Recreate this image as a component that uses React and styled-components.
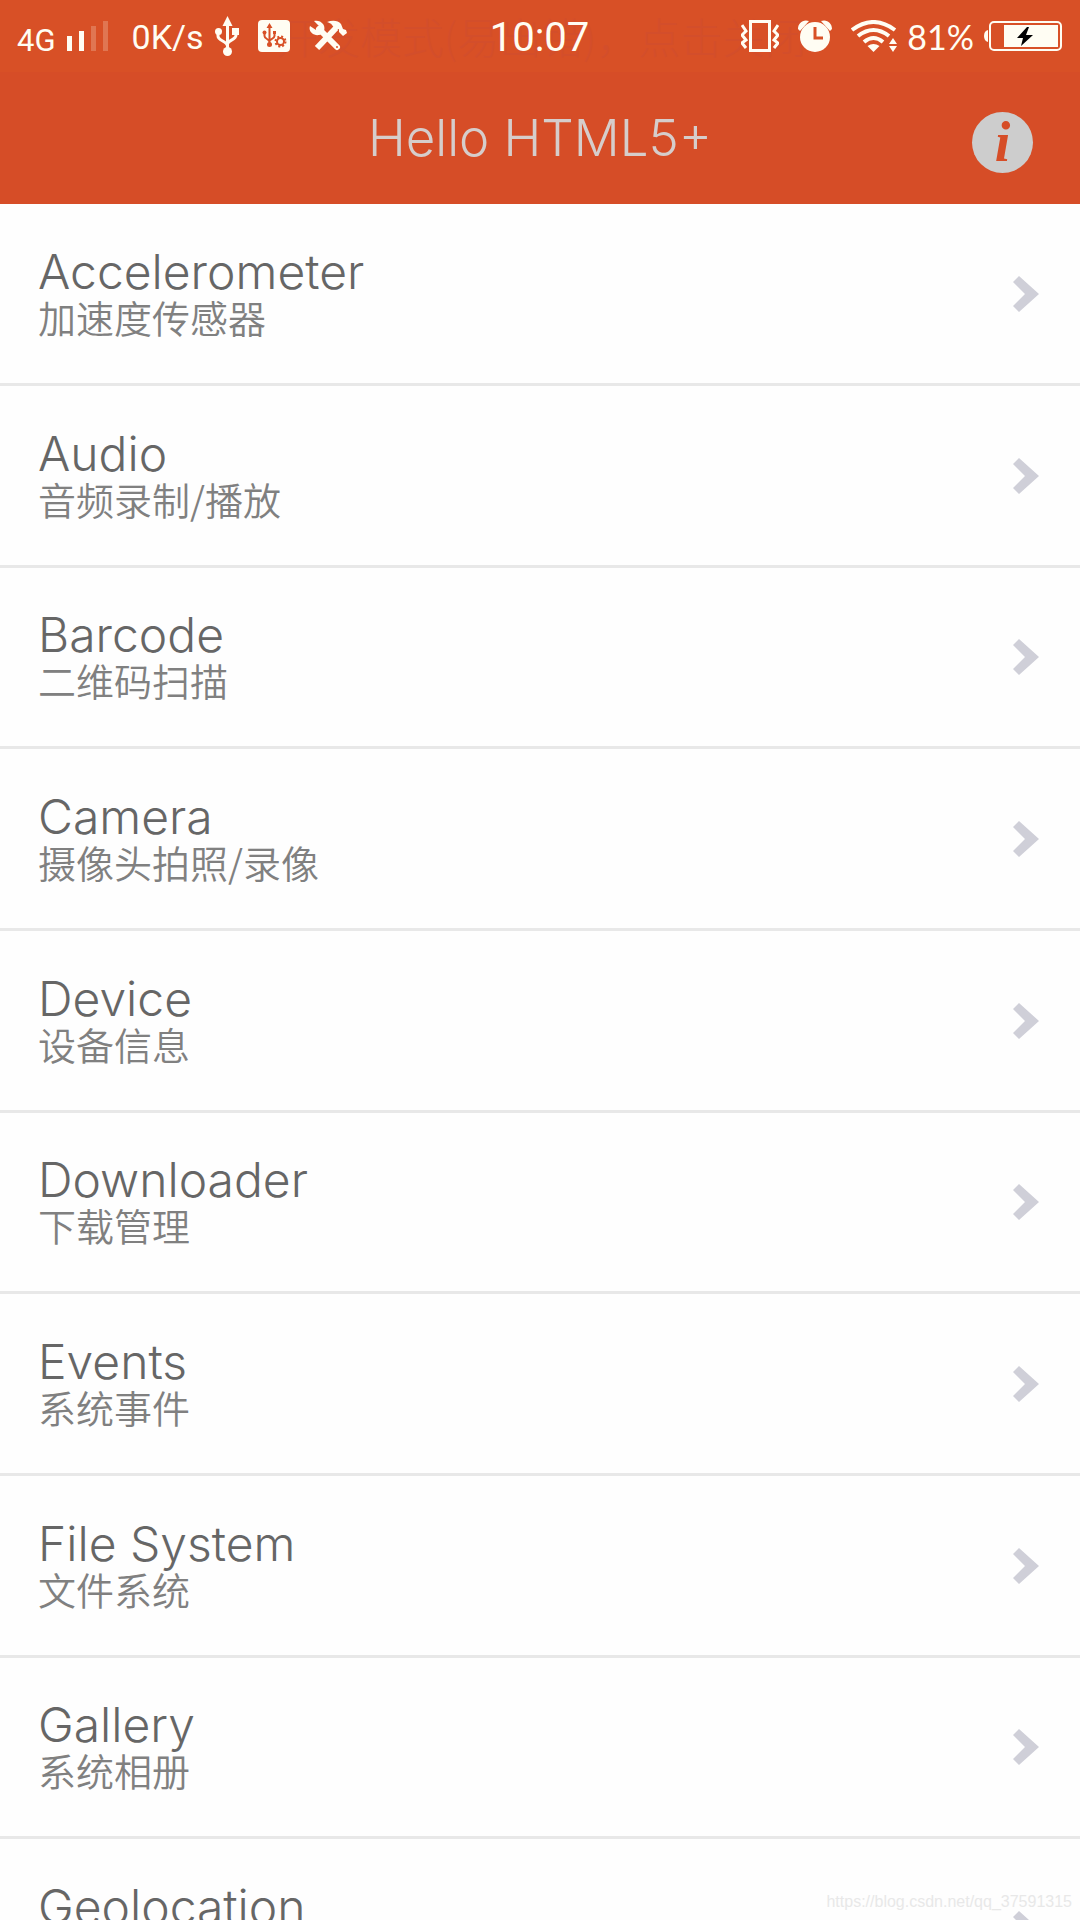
import React from 'react'
import styled, { createGlobalStyle } from 'styled-components'

const items = [
  { title: 'Accelerometer', note: '加速度传感器' },
  { title: 'Audio', note: '音频录制/播放' },
  { title: 'Barcode', note: '二维码扫描' },
  { title: 'Camera', note: '摄像头拍照/录像' },
  { title: 'Device', note: '设备信息' },
  { title: 'Downloader', note: '下载管理' },
  { title: 'Events', note: '系统事件' },
  { title: 'File System', note: '文件系统' },
  { title: 'Gallery', note: '系统相册' },
  { title: 'Geolocation', note: '地理位置' },
]

const SignalIcon = () => (
  <svg width="42" height="30" viewBox="0 0 42 30" fill="#fffdf3">
    <path d="M0 15h5v15H0zM12 10h5v20h-5z" />
    <path d="M24 5h5v25h-5zM36 0h5v30h-5z" opacity="0.22" />
  </svg>
)

const UsbIcon = () => (
  <svg width="24" height="40" viewBox="0 0 24 40" fill="none" stroke="#fffdf3" strokeWidth="3">
    <path d="M12.500 8v26M3 16v4c0 5 9 5 9.500 10M21 16v3c0 5-8 5-8.500 9" />
    <path d="M12.500 0l5 10h-10z" fill="#fffdf3" stroke="none" />
    <circle cx="3.500" cy="15.500" r="3.500" fill="#fffdf3" stroke="none" />
    <path d="M17 12h7v7h-7z" fill="#fffdf3" stroke="none" />
    <circle cx="12.500" cy="35.500" r="4.500" fill="#fffdf3" stroke="none" />
  </svg>
)

const UsbSettingsIcon = () => (
  <svg width="32" height="32" viewBox="0 0 32 32">
    <rect width="32" height="32" rx="4" fill="#fffdf3" />
    <g fill="none" stroke="#d85026" strokeWidth="2">
      <path d="M11.500 6v17M6.500 13v3c0 3 5 3 5 6M16.500 13v3c0 3-5 3-5 5" />
      <circle cx="22.500" cy="21.500" r="3.500" />
      <circle cx="22.500" cy="21.500" r="5" strokeDasharray="2 1.930" />
    </g>
    <g fill="#d85026">
      <path d="M11.500 3l3 5h-6zM15 11h3v3h-3z" />
      <circle cx="6.500" cy="12.500" r="2" />
      <circle cx="11.500" cy="24.500" r="2.500" />
    </g>
  </svg>
)

const ToolsIcon = () => (
  <svg width="38" height="32" viewBox="0 0 38 32" fill="none" stroke="#fffdf3">
    <path d="M10 9l18 18" strokeWidth="6" strokeLinecap="round" />
    <path d="M27 8L8 28" strokeWidth="6" />
    <path d="M5 1l5 5-3 4-6-4c-2 5 3 10 9 9 5-1 7-7 4-11C12 1 8 0 5 1z" fill="#fffdf3" stroke="none" />
    <path d="M18 2c5-2 11-2 14 2l2 5 3 1 1 3-4 3-4-4v-3l-3 1-4-5c-1-2-3-2-5-3z" fill="#fffdf3" stroke="none" />
    <circle cx="28" cy="27" r="1" fill="#d85026" stroke="none" />
  </svg>
)

const VibrateIcon = () => (
  <svg width="38" height="32" viewBox="0 0 38 32" fill="none" stroke="#fffdf3">
    <rect x="9.500" y="1.500" width="19" height="29" strokeWidth="3" />
    <path d="M1 5l4 6-4 4 4 5-4 3 4 5M37 5l-4 6 4 4-4 5 4 3-4 5" strokeWidth="3" />
  </svg>
)

const AlarmIcon = () => (
  <svg width="34" height="32" viewBox="0 0 34 32" fill="#fffdf3">
    <circle cx="17" cy="17" r="15" />
    <path d="M0 9C0 3 5-1 11 1L2 11zM34 9c0-6-5-10-11-8l9 10z" />
    <path d="M17 7v11h8" fill="none" stroke="#d85026" strokeWidth="3" />
  </svg>
)

const WifiIcon = () => (
  <svg width="46" height="32" viewBox="0 0 46 32" fill="none" stroke="#fffdf3" strokeWidth="4">
    <path d="M1 10q21.500-16 43 0M7 16q15.500-12 31 0M13 22q9.500-8 19 0" />
    <path d="M16.500 26q6-4 12 0l-6 6z" fill="#fffdf3" stroke="none" />
    <path d="M38 24l4-6 4 6zM38 26h8l-4 6z" fill="#fffdf3" stroke="none" />
  </svg>
)

const BatteryIcon = () => (
  <svg width="78" height="30" viewBox="0 0 78 30">
    <path d="M4 9v12q-4-1-4-6t4-6z" fill="#fffdf3" />
    <rect x="6" y="1" width="71" height="28" rx="4" fill="none" stroke="#fffdf3" strokeWidth="2" />
    <path d="M20 4h54v22H20z" fill="#fffdf3" />
    <path d="M43 6L33 17h6l-2 8 12-11h-7l3-8z" fill="#000" />
  </svg>
)

const ChevronIcon = () => (
  <svg width="26" height="36" viewBox="0 0 26 36" fill="#cfcfd8">
    <path d="M6 0l20 18L6 36l-6-6 12-12L0 6z" />
  </svg>
)

const App = () => (
  <Page>
    <GlobalStyle />
    <Top>
      <StatusBar>
        <DebugNotice>开发模式(易出错)，点击关闭</DebugNotice>
        <StatusLeft>
          <Network>4G</Network>
          <SignalIcon />
          <Speed>0K/s</Speed>
          <Icons>
            <UsbIcon />
            <UsbSettingsIcon />
            <ToolsIcon />
          </Icons>
        </StatusLeft>
        <Clock>10:07</Clock>
        <StatusRight>
          <Icons>
            <VibrateIcon />
            <AlarmIcon />
            <WifiIcon />
          </Icons>
          <Percent>81%</Percent>
          <BatteryIcon />
        </StatusRight>
      </StatusBar>
      <TitleBar>
        <Title>Hello HTML5+</Title>
        <InfoButton type="button" aria-label="About">i</InfoButton>
      </TitleBar>
    </Top>
    <List>
      {items.map(({ title, note }) => (
        <Item key={title}>
          <ItemLink href={`#${title}`}>
            <ItemText>
              <ItemTitle>{title}</ItemTitle>
              <ItemNote>{note}</ItemNote>
            </ItemText>
            <ChevronIcon />
          </ItemLink>
        </Item>
      ))}
    </List>
    <Watermark>https://blog.csdn.net/qq_37591315</Watermark>
  </Page>
)

export default App

const GlobalStyle = createGlobalStyle`
  * {
    box-sizing: border-box;
  }

  body {
    margin: 0;
    background-color: #fefefe;
    font-family: Inter, "Noto Sans CJK SC", sans-serif;
  }
`

const Page = styled.div`
  position: relative;
  height: 100vh;
  overflow: hidden;
`

const Top = styled.header`
  background-color: #d64d27;
`

const StatusBar = styled.div`
  position: relative;
  display: grid;
  grid-template-columns: 1fr auto 1fr;
  align-items: center;
  height: 72px;
  padding: 0 18px 0 17px;
  background-color: #d85026;
  color: #fffdf3;
  font-family: Roboto, sans-serif;
`

const DebugNotice = styled.span`
  position: absolute;
  left: 276px;
  top: 4px;
  color: #d34e2b;
  font-family: "Noto Sans CJK SC", sans-serif;
  font-size: 42px;
  font-weight: 300;
  line-height: 64px;
  white-space: nowrap;
`

const StatusLeft = styled.div`
  position: relative;
  display: flex;
  align-items: center;
  gap: 11px;
`

const StatusRight = styled.div`
  position: relative;
  display: flex;
  align-items: center;
  justify-content: flex-end;
  gap: 10px;
`

const Icons = styled.div`
  display: flex;
  align-items: center;
  gap: 19px;
`

const Network = styled.span`
  padding-top: 8px;
  font-size: 31px;
`

const Speed = styled.span`
  margin-left: 12px;
  padding-top: 2px;
  font-size: 34px;
`

const Clock = styled.time`
  position: relative;
  padding-top: 2px;
  font-size: 40px;
`

const Percent = styled.span`
  font-family: Lato, sans-serif;
  font-size: 34px;
`

const TitleBar = styled.div`
  display: grid;
  grid-template-columns: 1fr auto 1fr;
  align-items: center;
  height: 132px;
  padding: 0 47px;
`

const Title = styled.h1`
  grid-column: 2;
  margin: 0;
  color: #d6cdcb;
  font-size: 51px;
  font-weight: 300;
  line-height: 64px;
`

const InfoButton = styled.button`
  justify-self: end;
  width: 61px;
  height: 61px;
  margin-top: 8px;
  padding: 0;
  border: 0;
  border-radius: 50%;
  background-color: #cdcdcd;
  color: #d64d27;
  font: italic bold 56px/56px "Liberation Serif", serif;
  cursor: pointer;
`

const List = styled.ul`
  display: grid;
  grid-auto-rows: 182px 182px 181px;
  margin: 0;
  padding: 0;
  list-style: none;
`

const Item = styled.li`
  border-bottom: 3px solid #e8e8e8;
`

const ItemLink = styled.a`
  display: flex;
  align-items: center;
  justify-content: space-between;
  height: 100%;
  padding: 0 41px 0 38px;
  text-decoration: none;
`

const ItemText = styled.span`
  display: flex;
  flex-direction: column;
`

const ItemTitle = styled.span`
  color: #666;
  font-size: 48px;
  font-weight: 300;
  line-height: 46px;
`

const ItemNote = styled.span`
  color: #808080;
  font-family: "Noto Sans CJK SC", sans-serif;
  font-size: 38px;
  font-weight: 350;
  line-height: 44px;
`

const Watermark = styled.span`
  position: absolute;
  right: 8px;
  bottom: 8px;
  color: #e8e8e8;
  font-family: "Liberation Sans", sans-serif;
  font-size: 16px;
  line-height: 20px;
`
